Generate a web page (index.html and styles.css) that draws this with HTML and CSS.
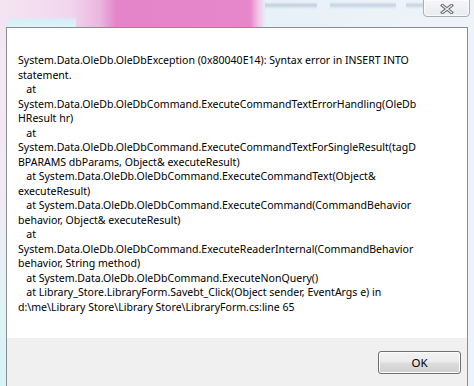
FILE: index.html
```html
<!DOCTYPE html>
<html>
<head>
<meta charset="utf-8">
<link rel="stylesheet" href="styles.css">
</head>
<body>
<div class="screen">
  <div class="titlebar">
    <div class="close-btn">
      <svg width="14" height="10" viewBox="0 0 14 10">
        <path d="M2.5 1.5 L11.5 8.5 M11.5 1.5 L2.5 8.5" stroke="#6b6f74" stroke-width="3.4" stroke-linecap="square" fill="none"/>
        <path d="M2.5 1.5 L11.5 8.5 M11.5 1.5 L2.5 8.5" stroke="#e9ecef" stroke-width="1.3" stroke-linecap="square" fill="none"/>
      </svg>
    </div>
  </div>
  <div class="window">
    <div class="content">
      <div class="message">System.Data.OleDb.OleDbException (0x80040E14): Syntax error in INSERT INTO
statement.
   at
System.Data.OleDb.OleDbCommand.ExecuteCommandTextErrorHandling(OleDb
HResult hr)
   at
System.Data.OleDb.OleDbCommand.ExecuteCommandTextForSingleResult(tagD
BPARAMS dbParams, Object&amp; executeResult)
   at System.Data.OleDb.OleDbCommand.ExecuteCommandText(Object&amp;
executeResult)
   at System.Data.OleDb.OleDbCommand.ExecuteCommand(CommandBehavior
behavior, Object&amp; executeResult)
   at
System.Data.OleDb.OleDbCommand.ExecuteReaderInternal(CommandBehavior
behavior, String method)
   at System.Data.OleDb.OleDbCommand.ExecuteNonQuery()
   at Library_Store.LibraryForm.Savebt_Click(Object sender, EventArgs e) in
d:\me\Library Store\Library Store\LibraryForm.cs:line 65</div>
    </div>
    <div class="footer">
      <button class="ok-btn">OK</button>
    </div>
  </div>
</div>
</body>
</html>
```

FILE: styles.css
```css
html, body {
  margin: 0;
  padding: 0;
}
body {
  width: 474px;
  height: 386px;
  overflow: hidden;
  font-family: "Noto Sans", "Open Sans", sans-serif;
}
.screen {
  width: 474px;
  height: 386px;
  display: flex;
  flex-direction: column;
  background:
    linear-gradient(to bottom, rgba(255,255,255,0) 2px, rgba(160,178,205,0.55) 5px, rgba(255,255,255,0) 9px) 265px 0 / 52px 12px no-repeat,
    linear-gradient(to bottom, rgba(255,255,255,0) 2px, rgba(160,178,205,0.5) 5px, rgba(255,255,255,0) 9px) 330px 0 / 66px 12px no-repeat,
    linear-gradient(to bottom, rgba(255,255,255,0) 2px, rgba(160,178,205,0.5) 5px, rgba(255,255,255,0) 9px) 406px 0 / 62px 12px no-repeat,
    linear-gradient(to bottom, rgba(214,240,250,0) 16px, #d6f0f8 21px, #dcf2f8 27px) 8px 0 / 68px 27px no-repeat,
    linear-gradient(to right, #f4e4f2 0px, #f1d6ee 70px, #eab6df 100px, #e585c9 116px, #e687ca 250px, #efc4e6 258px, #e8f1f8 266px, #eef3f9 474px) 0 0 / 474px 27px no-repeat,
    linear-gradient(to bottom, #f4e6f3 0px, #f1eaf5 200px, #dff3f6 320px, #d6f3f6 386px) 0 0 / 6px 386px no-repeat,
    #eef3f9;
}
.titlebar {
  height: 27px;
  display: flex;
  justify-content: flex-end;
  align-items: flex-start;
  padding-right: 4px;
}
.close-btn {
  width: 45px;
  height: 16px;
  margin-top: -1px;
  border: 1px solid #a9adb3;
  border-radius: 0 0 4px 4px;
  background: linear-gradient(to bottom, #f4f6f8, #e9ecf0);
  display: flex;
  align-items: center;
  justify-content: center;
  box-shadow: inset 0 0 0 1px rgba(255,255,255,0.7);
}
.close-btn svg {
  display: block;
  margin-top: 1px;
}
.window {
  flex: 1;
  margin: 0 6px;
  border: 1px solid #8a8d93;
  border-bottom: none;
  display: flex;
  flex-direction: column;
  background: #ffffff;
}
.content {
  flex: 1;
  background: #ffffff;
  padding: 25px 0 0 11px;
}
.message {
  white-space: pre;
  font-size: 10.55px;
  line-height: 14.5px;
  color: #000;
}
.footer {
  height: 48px;
  box-sizing: border-box;
  background: #f0f0f0;
  display: flex;
  justify-content: flex-end;
  align-items: flex-start;
  padding: 13px 6px 0 0;
}
.ok-btn {
  width: 83px;
  height: 23px;
  border: 1px solid #707070;
  border-radius: 3px;
  background: linear-gradient(to bottom, #f2f2f2 0%, #ebebeb 48%, #dddddd 52%, #cfcfcf 100%);
  box-shadow: inset 0 0 0 1px #fcfcfc;
  font-family: "Noto Sans", "Open Sans", sans-serif;
  font-size: 11.5px;
  color: #000;
  padding: 0;
}
```
